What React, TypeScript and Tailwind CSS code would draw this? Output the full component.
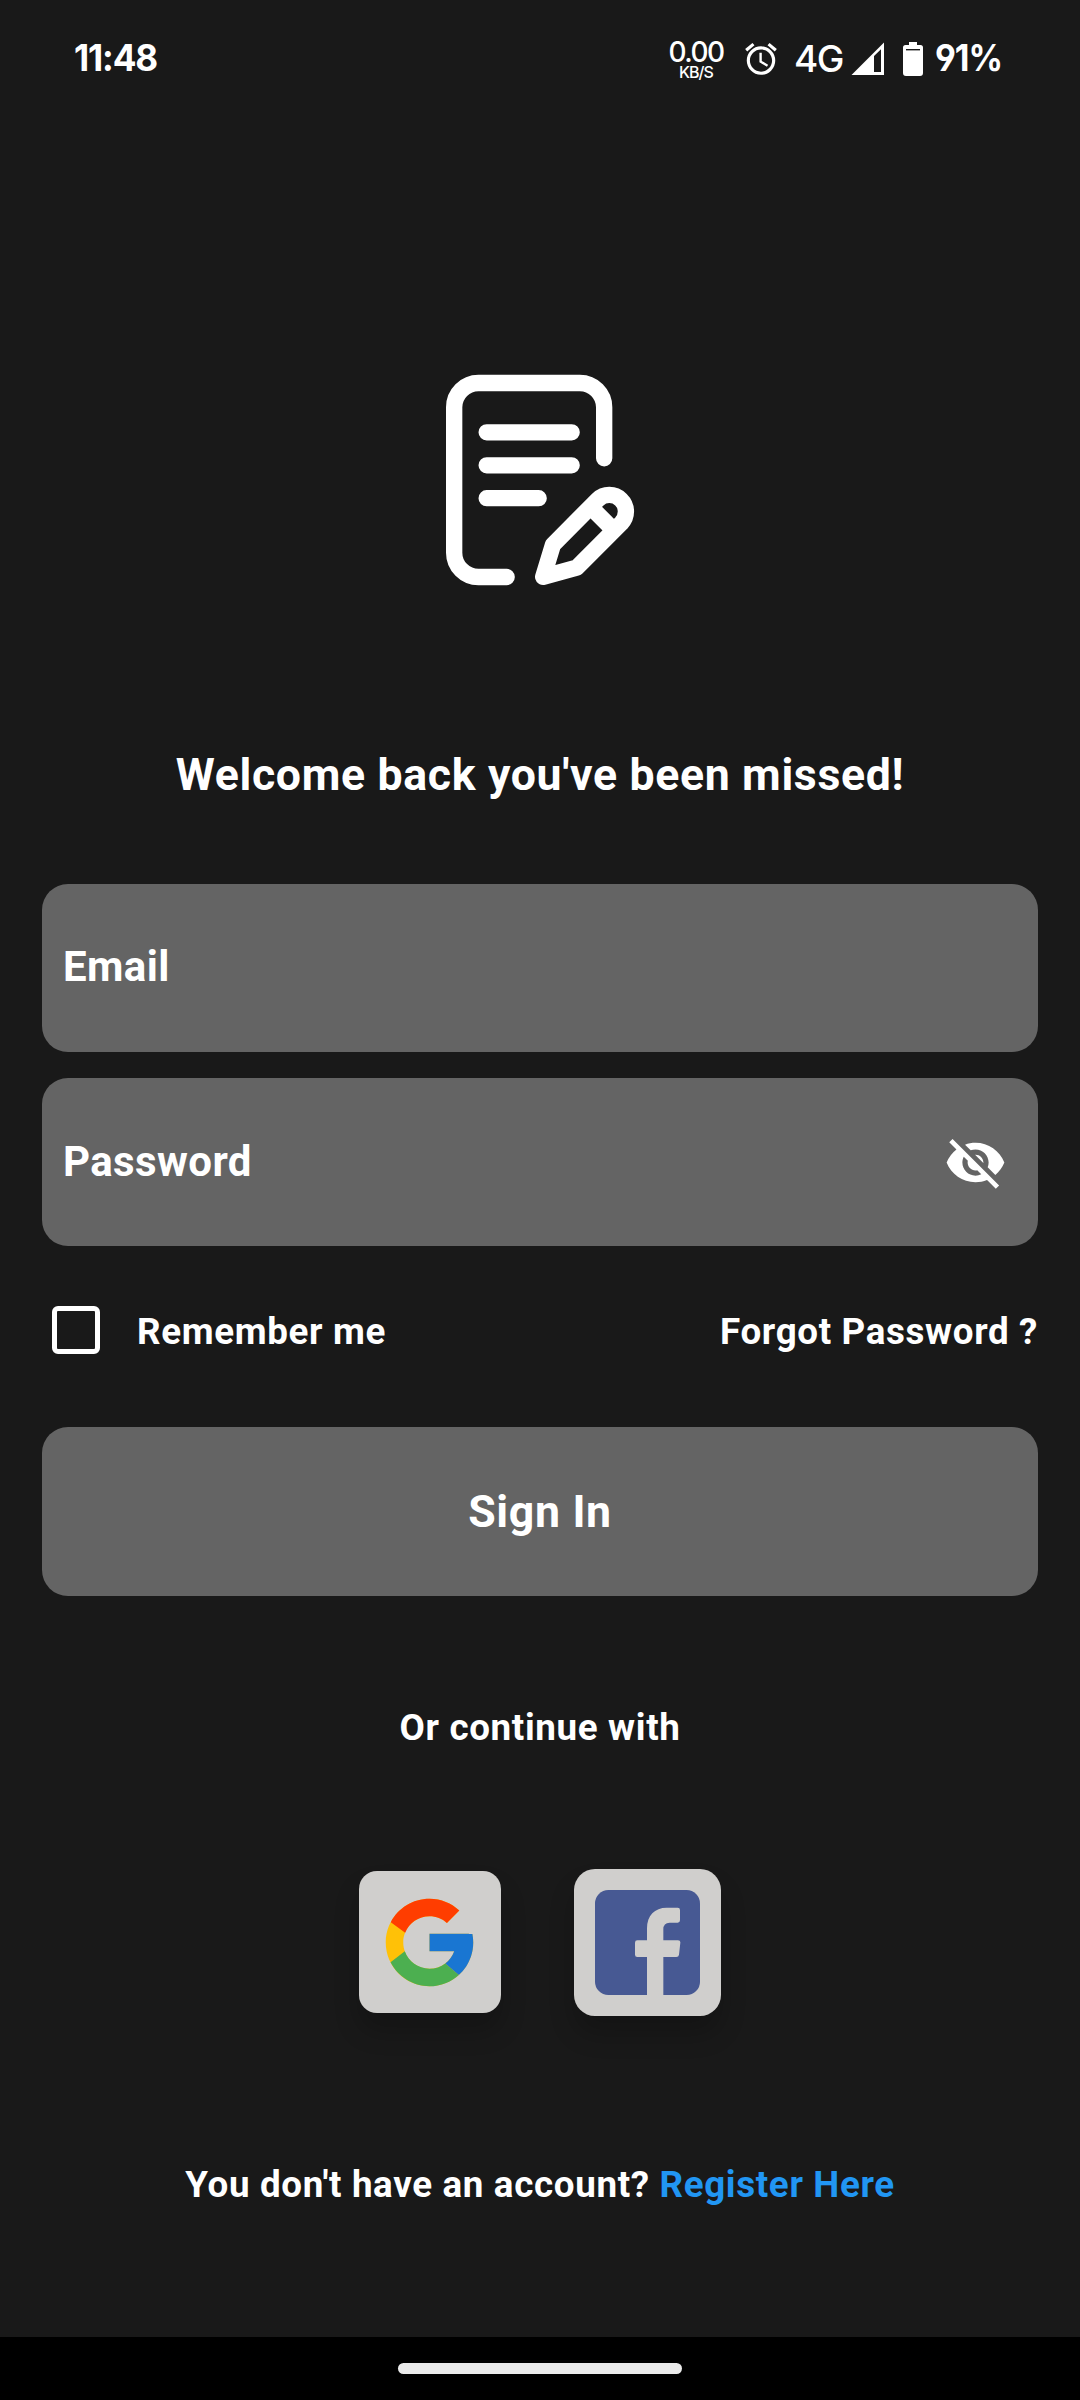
import { FcGoogle } from "react-icons/fc";
import { MdAlarm, MdVisibilityOff } from "react-icons/md";

function StatusBar() {
  return (
    <header className="flex h-[116px] items-start pt-[38px] font-['Inter',sans-serif] leading-10 tracking-normal text-white">
      <span className="ml-[74px] w-[90px] origin-left scale-x-95 text-[37px] font-bold tracking-[-1.2px] whitespace-nowrap">
        11:48
      </span>
      <div className="ml-[500px] flex w-16 flex-col items-center">
        <span className="h-[24px] text-[28px] leading-[28px] font-medium tracking-[-1.5px]">0.00</span>
        <span className="text-[16px] leading-[21px] font-medium tracking-[-1px]">KB/S</span>
      </div>
      <MdAlarm className="mt-[1.5px] ml-[14px] size-[38px]" />
      <span className="mt-px ml-[14px] w-[55px] text-[37px] font-medium tracking-[-1.5px]">4G</span>
      <svg className="mt-[4px] ml-[2px] h-[34px] w-[34px]" viewBox="0 0 34 34" fill="currentColor">
        <path fillRule="evenodd" d="M0.5 33 33 0.5V33ZM23 14V30H30V7.2Z" />
      </svg>
      <svg className="mt-[4px] ml-[17px] h-[34px] w-[22px]" viewBox="0 0 22 34">
        <path fill="currentColor" d="M7 0h8v3h3.5q2.500 0 2.500 2.500V31q0 3-3 3H4q-3 0-3-3V5.500Q1 3 3.500 3H7Z" />
        <path d="M4 7.700h14" stroke="#191919" strokeWidth="1.400" />
      </svg>
      <span className="ml-[11px] origin-left scale-x-[0.92] text-[37px] font-bold tracking-[-1.2px] whitespace-nowrap [font-feature-settings:'cv04','ss01']">
        91%
      </span>
    </header>
  );
}

function NoteLogo() {
  return (
    <svg
      className="mt-[234px] h-[260px] w-[240px] self-center"
      viewBox="0 0 720 780"
      fill="none"
      stroke="white"
      strokeWidth="49"
      strokeLinecap="round"
      strokeLinejoin="round"
    >
      <path d="M552.500 325V172a73 73 0 0 0-73-73H175.500a73 73 0 0 0-73 73V608a73 73 0 0 0 73 73H260" />
      <path d="M200 247H455M200 346H455M200 444.500H356" />
      <path d="M369.500 680.500 399 584 533 449A49.860 49.860 0 0 1 604 519L470 653Z" />
      <path d="M517 476 577 536" strokeLinecap="butt" />
    </svg>
  );
}

function FacebookLogo() {
  return (
    <svg className="size-[105px]" viewBox="765 120 315 315">
      <rect x="765" y="120" width="315" height="315" rx="40" fill="#475993" />
      <path
        fill="#d0cfcd"
        d="M921 436V321H892q-7 0-7-7V278q0-7 7-7H921V235C921 197 944 173 980 173H1013q7 0 7 7V211q0 7-7 7H989Q970 218 970 238V271H1014q8 0 7 7L1017 314q-1 7-8 7H970V436Z"
      />
    </svg>
  );
}

export default function App() {
  return (
    <div className="flex h-[2400px] w-[1080px] flex-col bg-[#191919] font-['Roboto',sans-serif] font-bold tracking-[0.656px] text-white">
      <StatusBar />
      <main className="flex flex-col px-[42px]">
        <NoteLogo />
        <h1 className="mt-[135px] text-center text-[44.625px] leading-[60px]">
          Welcome back you've been missed!
        </h1>
        <div className="mt-[79px] h-[168.400px] rounded-[26px] bg-[#646464] px-[21px] text-[42px] leading-[165px] tracking-[0.4px]">
          Email
        </div>
        <div className="mt-[25.600px] flex h-[168.400px] justify-between rounded-[26px] bg-[#646464] pr-[31.500px] pl-[21px] text-[42px] leading-[167px] tracking-[0.4px]">
          Password
          <MdVisibilityOff className="mt-[53px] size-[63px]" />
        </div>
        <div className="mt-[55.600px] flex h-[60px] items-center text-[36.750px] leading-[60px]">
          <span className="mt-[-3px] ml-[10px] size-[48px] rounded-[6px] border-[5px] border-white" />
          <span className="ml-[37px]">Remember me</span>
          <span className="ml-auto">Forgot Password ?</span>
        </div>
        <button className="mt-[65.400px] h-[168.400px] rounded-[26px] bg-[#646464] text-[44.625px] leading-[168px] tracking-[0.656px]">
          Sign In
        </button>
        <p className="mt-[107px] text-center text-[36.750px] leading-[50px]">Or continue with</p>
        <div className="mt-[116px] flex items-center justify-center gap-[73.500px]">
          <div className="flex size-[141.750px] items-center justify-center rounded-[18px] bg-[#d0cfcd] shadow-[0_18px_26px_rgba(0,0,0,0.2)]">
            <FcGoogle className="size-[105px]" />
          </div>
          <div className="flex size-[147px] items-center justify-center rounded-[21px] bg-[#d0cfcd] shadow-[0_18px_26px_rgba(0,0,0,0.2)]">
            <FacebookLogo />
          </div>
        </div>
        <p className="mt-[144px] text-center text-[36.750px] leading-[50px]">
          You don't have an account? <span className="text-[#2196f3]">Register Here</span>
        </p>
      </main>
      <footer className="mt-auto flex h-[63px] justify-center bg-black pt-[26px]">
        <div className="h-[11px] w-[284px] rounded-full bg-[#ebebeb]" />
      </footer>
    </div>
  );
}
